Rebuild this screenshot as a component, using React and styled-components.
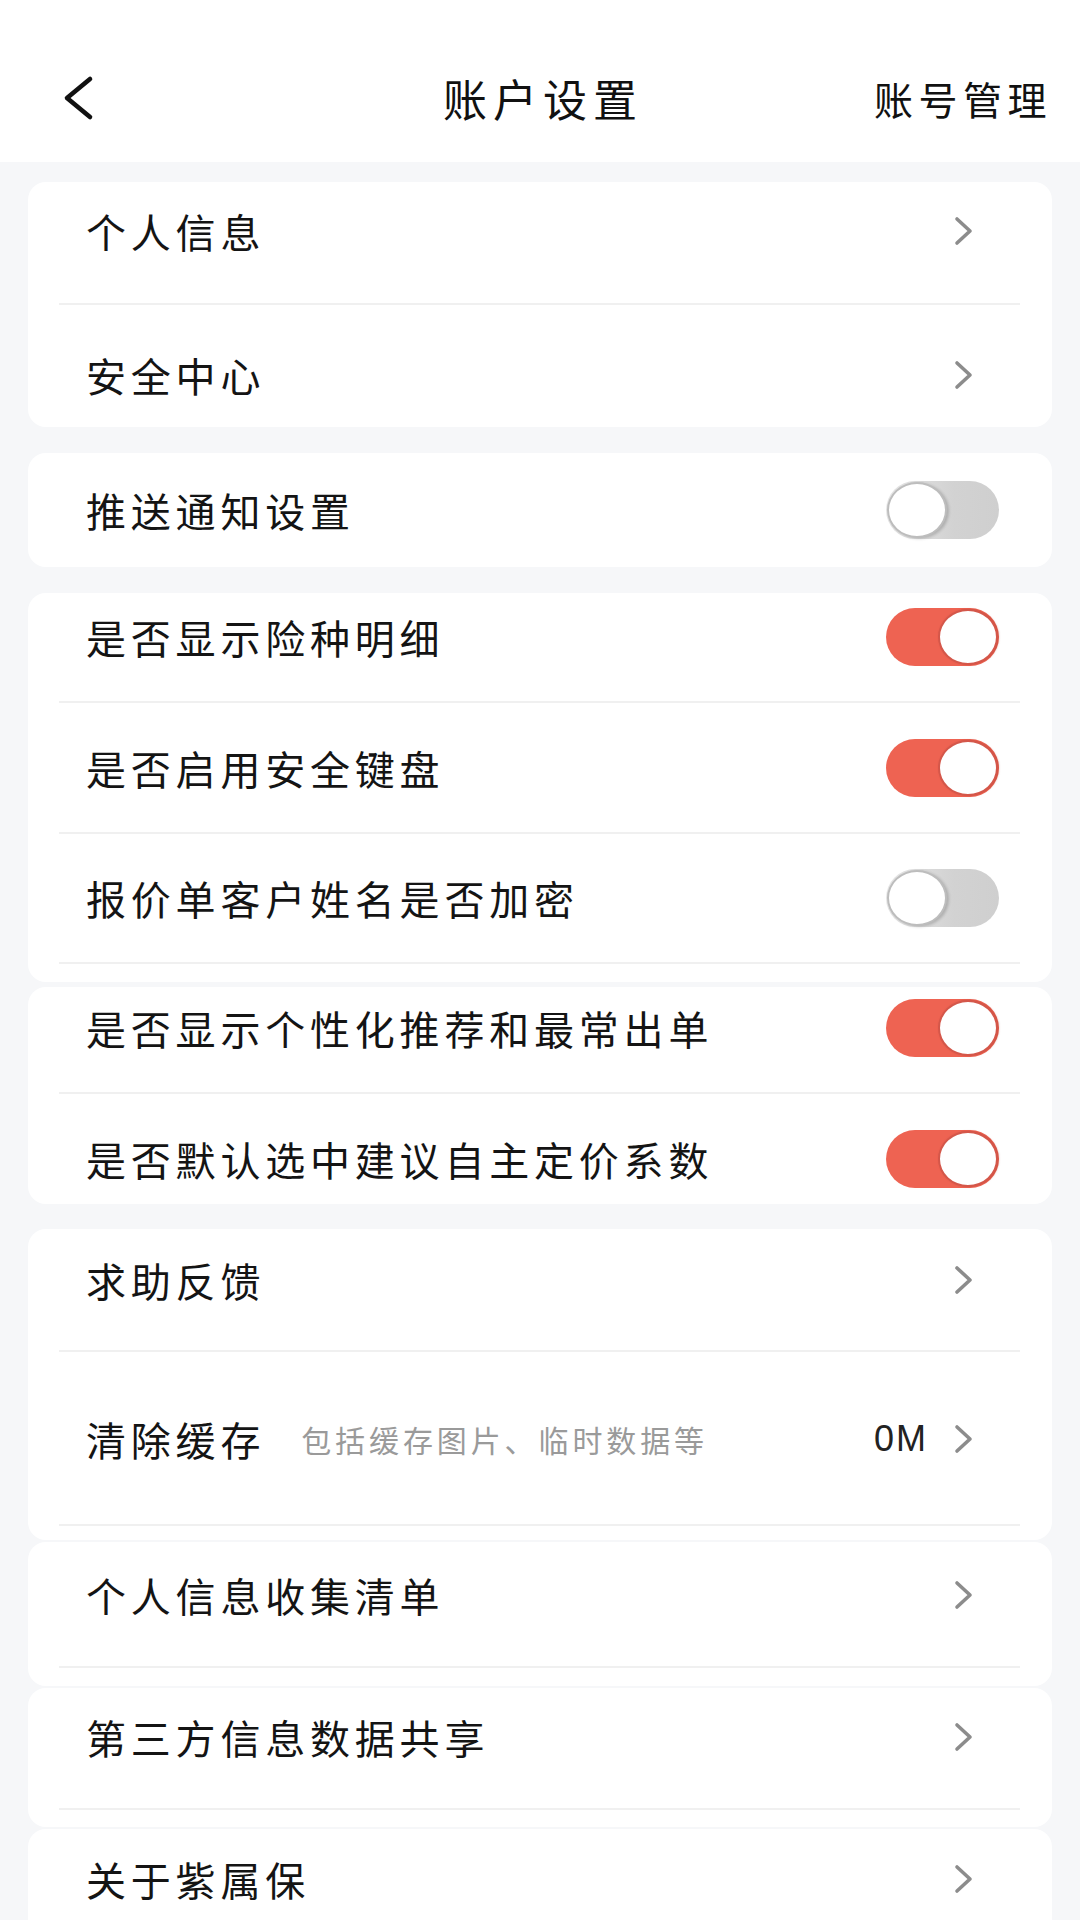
import React from "react";
import styled, { createGlobalStyle } from "styled-components";

const Global = createGlobalStyle`
  html, body { margin: 0; padding: 0; height: 1920px; overflow: hidden; background: #f6f7f9; }
  body { font-family: "Noto Sans CJK SC", "Noto Sans", sans-serif; }
  * { box-sizing: border-box; }
`;

const Page = styled.div`
  width: 1080px;
  min-height: 1920px;
  background: #f6f7f9;
`;

const Header = styled.header`
  height: 162px;
  background: #ffffff;
  padding: 34px 34px 0 34px;
  display: grid;
  grid-template-columns: 1fr auto 1fr;
  align-items: center;
`;

const BackBtn = styled.div`
  display: flex;
  align-items: center;
  margin-left: 27px;
`;

const Title = styled.h1`
  margin: 0 -6px 0 0;
  font-size: 44px;
  font-weight: 400;
  letter-spacing: 6px;
  color: #111;
  line-height: 1;
`;

const HeaderAction = styled.div`
  justify-self: end;
  font-size: 39px;
  letter-spacing: 5.5px;
  margin-right: -6px;
  color: #111;
  line-height: 1;
`;

const Body = styled.main`
  padding: 0 28px;
  display: flex;
  flex-direction: column;
`;

const Card = styled.section`
  background: #ffffff;
  border-radius: 18px;
  margin-top: ${(p) => p.$mt}px;
  padding-bottom: ${(p) => p.$tail || 0}px;
  display: flex;
  flex-direction: column;
`;

const Row = styled.div`
  margin: 0 32px 0 31px;
  height: ${(p) => p.$h}px;
  padding-top: ${(p) => p.$pt || 0}px;
  padding-bottom: ${(p) => p.$pb || 0}px;
  padding-left: 27px;
  display: flex;
  align-items: center;
  border-bottom: ${(p) => (p.$divider ? "2px solid #f0f0f0" : "none")};
`;

const Label = styled.span`
  font-size: 40px;
  letter-spacing: 4.8px;
  color: #141414;
  line-height: 1;
  white-space: nowrap;
`;

const Sub = styled.span`
  margin-left: 36px;
  font-size: 30px;
  letter-spacing: 3.9px;
  color: #9a9a9a;
  line-height: 1;
  white-space: nowrap;
`;

const Spacer = styled.span`
  flex: 1;
`;

const Value = styled.span`
  font-family: "Liberation Sans", "Noto Sans", sans-serif;
  font-size: 36px;
  letter-spacing: 2px;
  color: #222;
  margin-right: 26px;
  line-height: 1;
`;

const ChevronBox = styled.span`
  display: flex;
  margin-right: 46px;
`;

const Track = styled.span`
  width: 113px;
  height: 58px;
  border-radius: 29px;
  margin-right: 21px;
  padding: 1px;
  display: flex;
  align-items: center;
  justify-content: ${(p) => (p.$on ? "flex-end" : "flex-start")};
  background: ${(p) =>
    p.$on ? "#ee6352" : "linear-gradient(90deg, #e6e6e6 0%, #d2d2d2 60%, #cfcfcf 100%)"};
`;

const Knob = styled.span`
  width: 60px;
  height: 56px;
  border-radius: 50%;
  background: #ffffff;
  border: 2px solid ${(p) => (p.$on ? "#d4574a" : "#bdbdbd")};
  box-shadow: ${(p) =>
    p.$on ? "1px 0 2px rgba(150,40,30,0.35)" : "2px 1px 3px rgba(0,0,0,0.18)"};
`;

const Chevron = () => (
  <ChevronBox>
    <svg width="20" height="30" viewBox="0 0 20 30">
      <polyline
        points="3,3 16,15 3,27"
        fill="none"
        stroke="#8c8c8c"
        strokeWidth="3.6"
        strokeLinecap="round"
        strokeLinejoin="round"
      />
    </svg>
  </ChevronBox>
);

const Toggle = ({ on }) => (
  <Track $on={on}>
    <Knob $on={on} />
  </Track>
);

const cards = [
  {
    mt: 20,
    rows: [
      { t: "个人信息", h: 123, pb: 24, div: true, trail: "chev" },
      { t: "安全中心", h: 122, pt: 18, trail: "chev" },
    ],
  },
  { mt: 26, rows: [{ t: "推送通知设置", h: 114, trail: "off" }] },
  {
    mt: 26,
    tail: 18,
    rows: [
      { t: "是否显示险种明细", h: 110, pb: 20, div: true, trail: "on" },
      { t: "是否启用安全键盘", h: 131, div: true, trail: "on" },
      { t: "报价单客户姓名是否加密", h: 130, div: true, trail: "off" },
    ],
  },
  {
    mt: 5,
    rows: [
      { t: "是否显示个性化推荐和最常出单", h: 107, pb: 23, div: true, trail: "on" },
      { t: "是否默认选中建议自主定价系数", h: 110, pt: 20, trail: "on" },
    ],
  },
  {
    mt: 25,
    tail: 14,
    rows: [
      { t: "求助反馈", h: 123, pb: 19, div: true, trail: "chev" },
      {
        t: "清除缓存",
        sub: "包括缓存图片、临时数据等",
        value: "0M",
        h: 174,
        pt: 2,
        div: true,
        trail: "chev",
      },
    ],
  },
  { mt: 2, tail: 18, rows: [{ t: "个人信息收集清单", h: 126, pb: 18, div: true, trail: "chev" }] },
  { mt: 2, tail: 17, rows: [{ t: "第三方信息数据共享", h: 122, pb: 22, div: true, trail: "chev" }] },
  { mt: 2, rows: [{ t: "关于紫属保", h: 124, pb: 22, div: true, trail: "chev" }] },
];

export default function App() {
  return (
    <Page>
      <Global />
      <Header>
        <BackBtn>
          <svg width="34" height="46" viewBox="0 0 34 46">
            <polyline
              points="29,4 6,23 29,42"
              fill="none"
              stroke="#111"
              strokeWidth="4.6"
              strokeLinecap="round"
              strokeLinejoin="round"
            />
          </svg>
        </BackBtn>
        <Title>账户设置</Title>
        <HeaderAction>账号管理</HeaderAction>
      </Header>
      <Body>
        {cards.map((c, i) => (
          <Card key={i} $mt={c.mt} $tail={c.tail}>
            {c.rows.map((r, j) => (
              <Row key={j} $h={r.h} $pt={r.pt} $pb={r.pb} $divider={r.div}>
                <Label>{r.t}</Label>
                {r.sub && <Sub>{r.sub}</Sub>}
                <Spacer />
                {r.value && <Value>{r.value}</Value>}
                {r.trail === "chev" && <Chevron />}
                {r.trail === "on" && <Toggle on />}
                {r.trail === "off" && <Toggle on={false} />}
              </Row>
            ))}
          </Card>
        ))}
      </Body>
    </Page>
  );
}
